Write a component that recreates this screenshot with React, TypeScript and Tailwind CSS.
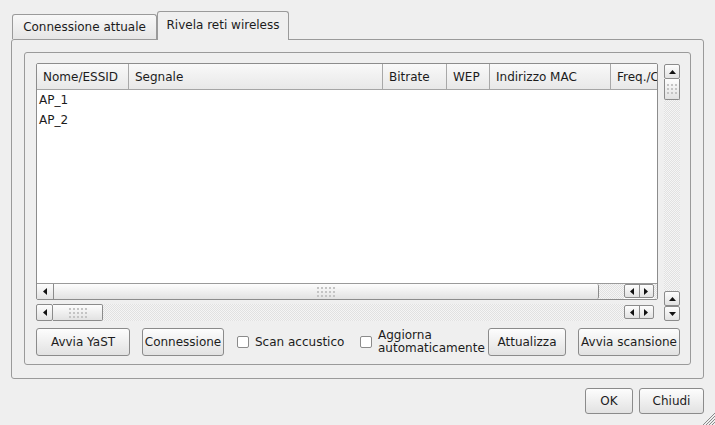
import React from "react";

const checker =
  "[background:repeating-conic-gradient(#e1e1e1_0%_25%,#f5f5f5_0%_50%)_0_0/2px_2px]";
const btnFace = "bg-linear-to-b from-[#fdfdfd] to-[#e2e2e2]";

const Arrow = ({ dir }: { dir: "up" | "down" | "left" | "right" }) => {
  const horiz = dir === "left" || dir === "right";
  const pts = {
    up: "0,4 7,4 3.5,0",
    down: "0,0 7,0 3.5,4",
    left: "4,0 4,7 0,3.5",
    right: "0,0 0,7 4,3.5",
  }[dir];
  return (
    <svg width={horiz ? 4 : 7} height={horiz ? 7 : 4} viewBox={horiz ? "0 0 4 7" : "0 0 7 4"}>
      <polygon points={pts} fill="#111" />
    </svg>
  );
};

const Grip = ({ cols, rows }: { cols: number; rows: number }) => (
  <svg width={cols * 4 - 2} height={rows * 4 - 2}>
    {Array.from({ length: cols * rows }).map((_, i) => (
      <rect key={i} x={(i % cols) * 4} y={Math.floor(i / cols) * 4} width="2" height="2" fill="#c4c4c4" />
    ))}
  </svg>
);

const Button = ({ label, className }: { label: string; className: string }) => (
  <div
    className={`flex items-center justify-center border border-[#8b8b8b] rounded-[3px] whitespace-nowrap ${btnFace} ${className}`}
  >
    {label}
  </div>
);

const ArrowPair = ({ className }: { className: string }) => (
  <div className={`flex w-[30px] border border-[#8b8b8b] rounded-[2px] ${btnFace} ${className}`}>
    <div className="flex flex-1 items-center justify-center border-r border-[#8b8b8b]">
      <Arrow dir="left" />
    </div>
    <div className="flex flex-1 items-center justify-center">
      <Arrow dir="right" />
    </div>
  </div>
);

const VBtn = ({ dir }: { dir: "up" | "down" }) => (
  <div className={`flex h-[15px] items-center justify-center border border-[#8b8b8b] rounded-[2px] ${btnFace}`}>
    <Arrow dir={dir} />
  </div>
);

const columns = [
  { label: "Nome/ESSID", w: "w-[92px]" },
  { label: "Segnale", w: "w-[254px]" },
  { label: "Bitrate", w: "w-[64px]" },
  { label: "WEP", w: "w-[43px]" },
  { label: "Indirizzo MAC", w: "w-[121px]" },
];

const Checkbox = ({ children, className }: { children: React.ReactNode; className: string }) => (
  <div className={`flex items-center ${className}`}>
    <div className="w-[12px] h-[12px] shrink-0 border border-[#8b8b8b] rounded-[2px] bg-white" />
    <div className="ml-[6px] leading-[13px]">{children}</div>
  </div>
);

export default function App() {
  return (
    <div className="relative w-[715px] h-[425px] overflow-hidden bg-[#efefef] font-['DejaVu_Sans',sans-serif] text-[12px] text-[#1c1c1c]">
      {/* Tabs */}
      <div className="flex items-end h-[39px] pl-[12px]">
        <div className="flex items-center justify-center w-[145px] h-[25px] border border-b-0 border-[#9a9a9a] rounded-t-[3px] bg-linear-to-b from-[#f8f8f8] to-[#e6e6e6]">
          Connessione attuale
        </div>
        <div className="relative z-10 -mb-px flex items-center justify-center w-[132px] h-[29px] pb-[3px] border border-b-0 border-[#9a9a9a] rounded-t-[3px] bg-[#efefef]">
          Rivela reti wireless
        </div>
      </div>

      {/* Tab pane */}
      <div className="ml-[11px] w-[693px] h-[340px] border border-[#9a9a9a] rounded-[3px] pt-[12px] pl-[12px]">
        <div className="w-[667px] h-[313px] border border-[#9a9a9a] rounded-[3px] pl-[11px] pt-[10px]">
          <div className="flex">
            <div className="w-[622px]">
              {/* List view */}
              <div className="flex flex-col h-[237px] border border-[#8c8c8c] rounded-[2px] bg-white overflow-hidden">
                <div className="flex h-[26px] shrink-0 border-b border-[#a5a5a5] bg-linear-to-b from-[#f9f9f9] to-[#e8e8e8]">
                  {columns.map((c) => (
                    <div key={c.label} className={`flex items-center pl-[6px] border-r border-[#a8a8a8] ${c.w}`}>
                      {c.label}
                    </div>
                  ))}
                  <div className="flex flex-1 items-center pl-[6px] overflow-hidden whitespace-nowrap">
                    Freq./Canale
                  </div>
                </div>
                <div className="flex-1 pl-[2px]">
                  <div className="h-[20px] flex items-center">AP_1</div>
                  <div className="h-[20px] flex items-center">AP_2</div>
                </div>
                <div className="flex h-[16px] shrink-0 border-t border-[#9a9a9a]">
                  <div className={`flex w-[17px] items-center justify-center border-r border-[#8b8b8b] ${btnFace}`}>
                    <Arrow dir="left" />
                  </div>
                  <div className={`flex w-[545px] items-center justify-center border-r border-[#8b8b8b] rounded-r-[2px] ${btnFace}`}>
                    <Grip cols={5} rows={3} />
                  </div>
                  <div className={`flex-1 ${checker}`} />
                  <ArrowPair className="h-[14px]" />
                  <div className={`w-[3px] ${checker}`} />
                </div>
              </div>

              {/* Outer horizontal scrollbar */}
              <div className="flex mt-[4px] h-[17px] w-[618px]">
                <div className={`flex w-[17px] items-center justify-center border border-[#8b8b8b] rounded-[2px] ${btnFace}`}>
                  <Arrow dir="left" />
                </div>
                <div className={`flex w-[50px] items-center justify-center border border-l-0 border-[#8b8b8b] rounded-r-[2px] ${btnFace}`}>
                  <Grip cols={5} rows={3} />
                </div>
                <div className={`flex-1 ${checker}`} />
                <ArrowPair className="h-[14px] mt-[1px]" />
              </div>
            </div>

            {/* Outer vertical scrollbar */}
            <div className="flex flex-col ml-[6px] mt-[1px] w-[16px] h-[257px]">
              <VBtn dir="up" />
              <div className={`flex h-[21px] items-center justify-center border border-t-0 border-[#8b8b8b] rounded-b-[2px] ${btnFace}`}>
                <Grip cols={3} rows={3} />
              </div>
              <div className={`flex-1 ${checker}`} />
              <VBtn dir="up" />
              <VBtn dir="down" />
            </div>
          </div>

          {/* Button row */}
          <div className="flex items-center mt-[7px] h-[28px]">
            <Button label="Avvia YaST" className="w-[94px] h-full" />
            <Button label="Connessione" className="ml-[12px] w-[82px] h-full" />
            <Checkbox className="ml-[13px] w-[123px]">Scan accustico</Checkbox>
            <Checkbox className="w-[128px]">
              Aggiorna
              <br />
              automaticamente
            </Checkbox>
            <Button label="Attualizza" className="w-[78px] h-full" />
            <Button label="Avvia scansione" className="ml-[12px] w-[102px] h-full" />
          </div>
        </div>
      </div>

      {/* Dialog buttons */}
      <div className="flex justify-end gap-[6px] pr-[11px] mt-[9px]">
        <Button label="OK" className="w-[48px] h-[26px]" />
        <Button label="Chiudi" className="w-[65px] h-[26px]" />
      </div>

      {/* Size grip */}
      <svg className="absolute right-0 bottom-0" width="14" height="14" viewBox="0 0 14 14">
        {[3, 6, 9, 12].map((o) => (
          <line key={o} x1={14 - o} y1="14" x2="14" y2={14 - o} stroke="#8a8a8a" strokeWidth="1" />
        ))}
      </svg>
    </div>
  );
}
